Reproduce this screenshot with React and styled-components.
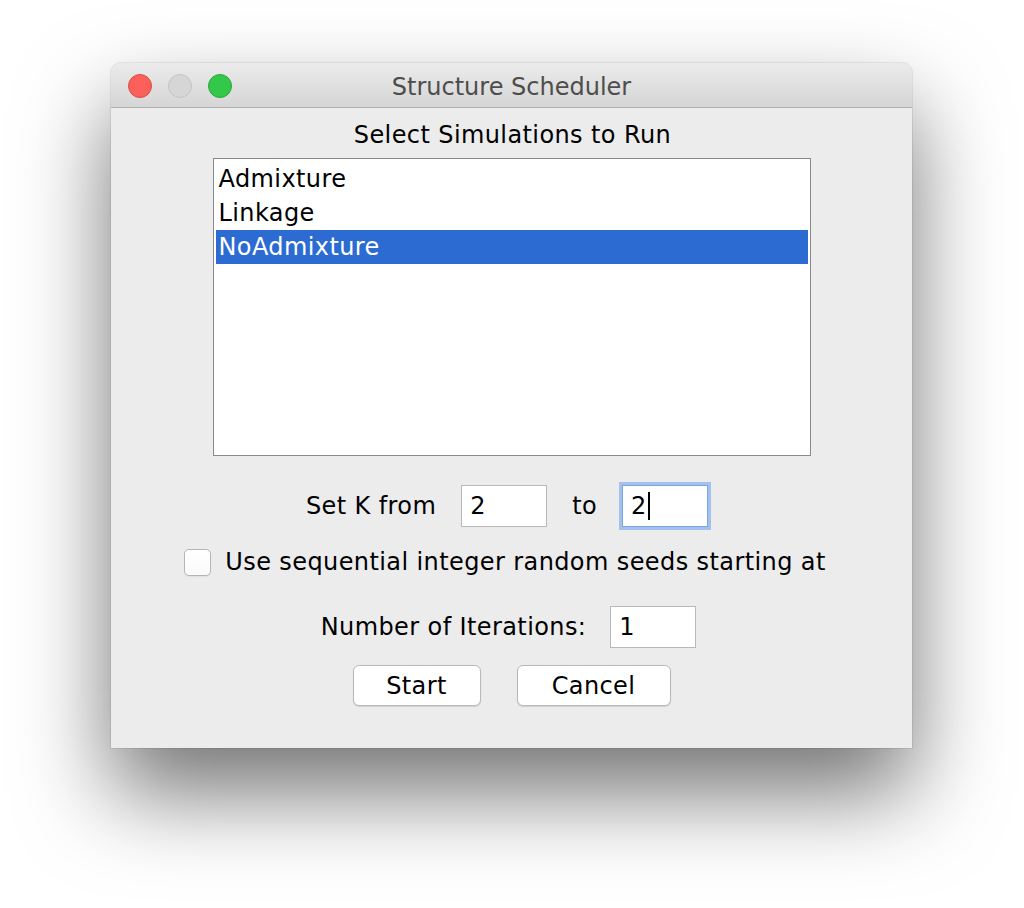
import React from 'react';
import styled, { createGlobalStyle } from 'styled-components';

const GlobalStyle = createGlobalStyle`
  html, body {
    margin: 0;
    padding: 0;
    background: #ffffff;
  }
  body {
    font-family: "DejaVu Sans", "Liberation Sans", sans-serif;
  }
`;

/*  PAGE + WINDOW  */
const Page = styled.div`
  width: 1024px;
  height: 908px;
  padding: 63px 0 0 111px;
  box-sizing: border-box;
`;

const Window = styled.div`
  width: 801px;
  height: 685px;
  background: #ececec;
  border-radius: 10px 10px 0 0;
  box-shadow: 0 0 0 1px rgba(0, 0, 0, 0.07), 0 45px 90px rgba(0, 0, 0, 0.55);
  display: flex;
  flex-direction: column;
`;

const TitleBar = styled.div`
  height: 44px;
  flex: none;
  position: relative;
  display: flex;
  align-items: center;
  justify-content: center;
  background: linear-gradient(#ebebeb, #d5d5d5);
  border-bottom: 1px solid #b1b1b1;
  border-radius: 10px 10px 0 0;
`;

const Lights = styled.div`
  position: absolute;
  left: 17px;
  top: 11px;
  display: flex;
  gap: 16px;
`;

const Light = styled.span`
  width: 24px;
  height: 24px;
  border-radius: 50%;
  box-sizing: border-box;
  background: ${p => p.color};
  border: 1px solid ${p => p.edge};
`;

const Title = styled.div`
  font-size: 24px;
  color: #4d4d4d;
  padding-top: 3px;
`;

/*  BODY  */
const Body = styled.div`
  flex: 1;
  display: flex;
  flex-direction: column;
  align-items: center;
  padding-top: 11px;
  font-size: 24px;
  letter-spacing: 0.4px;
  color: #000;
`;

const Heading = styled.div`
  height: 32px;
  line-height: 32px;
  padding-left: 2px;
`;

const List = styled.div`
  margin-top: 7px;
  width: 598px;
  height: 298px;
  box-sizing: border-box;
  background: #ffffff;
  border: 1px solid #8a8a8a;
  padding: 3px 2px 0 2px;
`;

const ListItem = styled.div`
  height: 34px;
  line-height: 34px;
  padding-left: 3px;
  color: ${p => (p.selected ? '#ffffff' : '#000000')};
  background: ${p => (p.selected ? '#2b6bd2' : 'transparent')};
`;

const Row = styled.div`
  display: flex;
  align-items: center;
  gap: ${p => p.gap || 25}px;
  margin-top: ${p => p.top}px;
  margin-left: ${p => p.shift || 0}px;
`;

const Label = styled.span`
  white-space: nowrap;
`;

const Field = styled.div`
  width: 86px;
  height: 42px;
  box-sizing: border-box;
  background: #ffffff;
  border: 1px solid ${p => (p.focused ? '#7aa6e4' : '#b9b9b9')};
  box-shadow: ${p => (p.focused ? '0 0 0 3px #a3c1ec' : 'none')};
  padding-left: 8px;
  display: flex;
  align-items: center;
`;

const Caret = styled.span`
  display: inline-block;
  width: 2px;
  height: 28px;
  margin-left: 1px;
  background: #000;
`;

const CheckBox = styled.span`
  width: 27px;
  height: 27px;
  box-sizing: border-box;
  border: 1px solid #b5b5b5;
  border-radius: 5px;
  background: linear-gradient(#ffffff, #fafafa);
  box-shadow: 0 1px 1px rgba(0, 0, 0, 0.06);
`;

const Button = styled.div`
  width: ${p => p.w}px;
  height: 41px;
  box-sizing: border-box;
  background: #ffffff;
  border: 1px solid #b9b9b9;
  border-radius: 6px;
  box-shadow: 0 1px 1px rgba(0, 0, 0, 0.12);
  display: flex;
  align-items: center;
  justify-content: center;
`;

const simulations = ['Admixture', 'Linkage', 'NoAdmixture'];

export default function App() {
  return (
    <Page>
      <GlobalStyle />
      <Window>
        <TitleBar>
          <Lights>
            <Light color="#fc605b" edge="#de4a45" />
            <Light color="#d6d6d6" edge="#c4c4c4" />
            <Light color="#34c84a" edge="#27a93a" />
          </Lights>
          <Title>Structure Scheduler</Title>
        </TitleBar>
        <Body>
          <Heading>Select Simulations to Run</Heading>
          <List>
            {simulations.map((name, index) => (
              <ListItem key={name} selected={index === 2}>{name}</ListItem>
            ))}
          </List>
          <Row top={29} shift={-9}>
            <Label>Set K from</Label>
            <Field>2</Field>
            <Label>to</Label>
            <Field focused>2<Caret /></Field>
          </Row>
          <Row top={21} gap={14} shift={-13}>
            <CheckBox />
            <Label>Use sequential integer random seeds starting at</Label>
          </Row>
          <Row top={30} gap={24} shift={-6}>
            <Label>Number of Iterations:</Label>
            <Field>1</Field>
          </Row>
          <Row top={17} gap={36}>
            <Button w={128}>Start</Button>
            <Button w={154}>Cancel</Button>
          </Row>
        </Body>
      </Window>
    </Page>
  );
}
